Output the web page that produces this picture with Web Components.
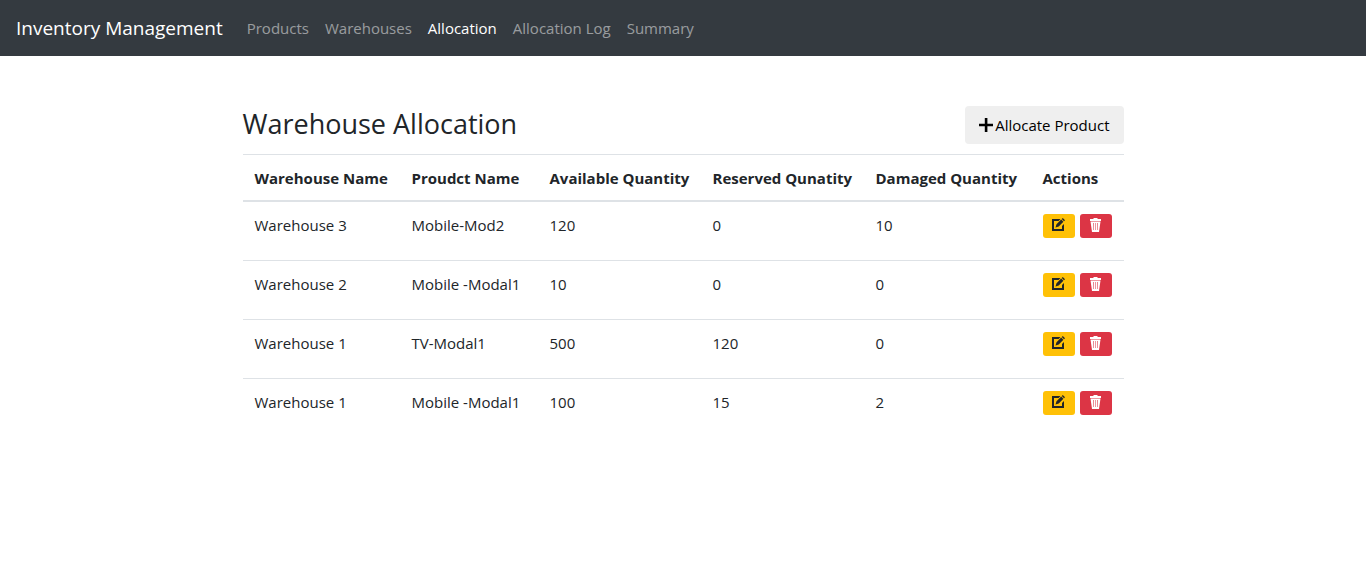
<!DOCTYPE html>
<html lang="en">
<head>
<meta charset="utf-8">
<meta name="viewport" content="width=device-width, initial-scale=1">
<title>Inventory Management</title>
<style>
  body {
    margin: 0;
    background: #fff;
    color: #212529;
    font: 15px/24px "Open Sans", "Noto Sans", sans-serif;
  }
</style>
</head>
<body>
<app-navbar>
  <span slot="brand">Inventory Management</span>
  <nav-item href="#products">Products</nav-item>
  <nav-item href="#warehouses">Warehouses</nav-item>
  <nav-item href="#allocation" active>Allocation</nav-item>
  <nav-item href="#log">Allocation Log</nav-item>
  <nav-item href="#summary">Summary</nav-item>
</app-navbar>
<page-section>
  <span slot="title">Warehouse Allocation</span>
  <add-button slot="action">Allocate Product</add-button>
  <allocation-table></allocation-table>
</page-section>

<script>
const define = (name, html, setup) => customElements.define(name, class extends HTMLElement {
  connectedCallback() {
    if (this.shadowRoot) return;
    const root = this.attachShadow({ mode: "open" });
    const template = document.createElement("template");
    template.innerHTML = html;
    root.append(template.content.cloneNode(true));
    if (setup) setup(this, root);
  }
});

define("app-navbar", `
  <style>
    :host { display: block; background: #343a40; }
    header { display: flex; align-items: center; padding: 8px 16px; }
    .brand { color: #fff; font-size: 19px; line-height: 30px; text-decoration: none; margin-right: 16px; white-space: nowrap; }
    nav { display: flex; }
  </style>
  <header>
    <a class="brand" href="#home"><slot name="brand"></slot></a>
    <nav><slot></slot></nav>
  </header>`);

define("nav-item", `
  <style>
    :host { display: block; }
    a { display: block; padding: 8px; color: rgba(255,255,255,.5); text-decoration: none; white-space: nowrap; }
    :host([active]) a { color: #fff; }
  </style>
  <a><slot></slot></a>`, (host, root) => {
    root.querySelector("a").href = host.getAttribute("href");
  });

define("page-section", `
  <style>
    :host { display: block; padding: 50px 16px; }
    main { max-width: 881px; margin: 0 auto; }
    .heading { display: flex; align-items: flex-start; justify-content: space-between; margin-bottom: 10px; }
    h1 { margin: 0; font-size: 27px; line-height: 36px; font-weight: 500; }
  </style>
  <main>
    <div class="heading"><h1><slot name="title"></slot></h1><slot name="action"></slot></div>
    <slot></slot>
  </main>`);

define("add-button", `
  <style>
    :host { display: block; }
    button { display: flex; align-items: center; gap: 2px; padding: 7px 14px; border: 0; border-radius: 4px; background: #efefef; color: #000; font: inherit; cursor: pointer; white-space: nowrap; }
    svg { width: 14px; height: 14px; }
  </style>
  <button type="button">
    <svg viewBox="0 0 14 14" aria-hidden="true"><path d="M5.8 0h2.6v5.8H14v2.500H8.400V14H5.800V8.300H0V5.800h5.800z"/></svg>
    <slot></slot>
  </button>`);

const icons = {
  edit: '<path d="M0 1h8.500L6.600 3H2v8h8V8l2-2v7H0z"/><path d="M10.800 0l2.200 2.200-1 1L9.800 1zM9.200 1.600l2.200 2.200-4.700 4.700L3.500 9.500l1-3.200z"/>',
  trash: '<path fill-rule="evenodd" d="M4.500 0h4v1H12v2H1V1h3.500zM1.500 3.500h10L10 14H3zM4.100 5l.4 7h.5L4.700 5zM6.300 5v7h.5V5zM8.400 5l-.3 7h.5L9 5z"/>'
};

define("row-action", `
  <style>
    :host { display: block; }
    button { display: flex; align-items: center; justify-content: center; width: 32px; height: 24px; padding: 0 1px 2px 0; border: 0; border-radius: 3px; background: #ffc107; color: #212529; cursor: pointer; }
    :host([kind="trash"]) button { background: #dc3545; color: #fff; }
    svg { width: 13px; height: 14px; fill: currentColor; }
  </style>
  <button type="button"><svg viewBox="0 0 13 14" aria-hidden="true"></svg></button>`, (host, root) => {
    const kind = host.getAttribute("kind");
    root.querySelector("svg").innerHTML = icons[kind];
    root.querySelector("button").setAttribute("aria-label", kind === "edit" ? "Edit" : "Delete");
  });

const allocations = [
  ["Warehouse 3", "Mobile-Mod2", 120, 0, 10],
  ["Warehouse 2", "Mobile -Modal1", 10, 0, 0],
  ["Warehouse 1", "TV-Modal1", 500, 120, 0],
  ["Warehouse 1", "Mobile -Modal1", 100, 15, 2]
];

define("allocation-table", `
  <style>
    :host { display: block; }
    table { width: 100%; table-layout: fixed; border-collapse: separate; border-spacing: 0; font: inherit; }
    th, td { text-align: left; vertical-align: top; border-top: 1px solid #dee2e6; white-space: nowrap; }
    th { padding: 11px 0 10px 12px; font-weight: 700; border-bottom: 2px solid #dee2e6; }
    td { padding: 11px 0 22px 12px; }
    td:last-child { padding-top: 12px; }
    tbody tr:first-child td { border-top: 0; }
    .name { width: 157px; }
    .product { width: 138px; }
    .stock { width: 163px; }
    .damaged { width: 167px; }
    .actions { display: flex; gap: 5px; }
  </style>
  <table>
    <colgroup><col class="name"><col class="product"><col class="stock"><col class="stock"><col class="damaged"><col></colgroup>
    <thead><tr><th>Warehouse Name</th><th>Proudct Name</th><th>Available Quantity</th><th>Reserved Qunatity</th><th>Damaged Quantity</th><th>Actions</th></tr></thead>
    <tbody></tbody>
  </table>`, (host, root) => {
    root.querySelector("tbody").innerHTML = allocations.map(row =>
      `<tr>${row.map(value => `<td>${value}</td>`).join("")}<td><div class="actions"><row-action kind="edit"></row-action><row-action kind="trash"></row-action></div></td></tr>`
    ).join("");
  });
</script>
</body>
</html>
